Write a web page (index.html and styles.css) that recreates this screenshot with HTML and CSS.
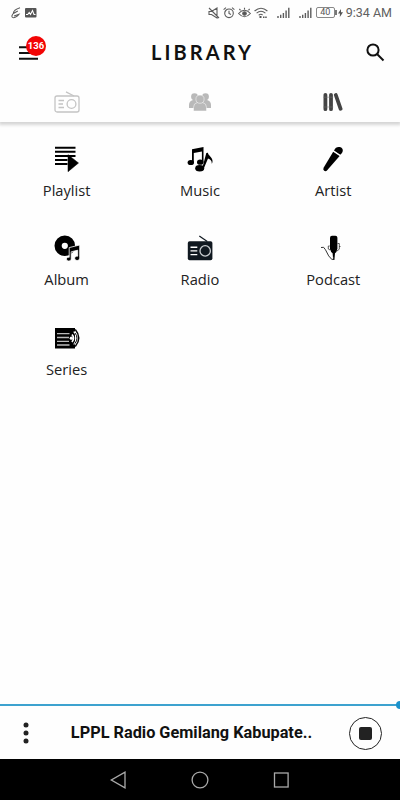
FILE: index.html
```html
<!DOCTYPE html>
<html lang="en">
<head>
  <meta charset="UTF-8">
  <meta name="viewport" content="width=device-width, initial-scale=1.0">
  <title>Library</title>
  <link rel="stylesheet" href="styles.css">
</head>
<body>
  <div class="app">
    <!-- Status bar -->
    <div class="status-bar">
      <svg class="pen" width="10" height="12" viewBox="0 0 10 12"><path d="M9 .8C5 2 2.5 4 2.3 6.5L6.8 4M2.3 6.5C1 8 .4 9.7 1.4 10.4c1.5 1 5-.7 6.6-3.2L3 9"/></svg>
      <svg class="monitor" width="12" height="10" viewBox="0 0 12 10"><rect width="11.5" height="9.5" rx="1"/><path d="M1 6.5h1.7l1.5-2 1.3 2 2-4 1.5 4h1.5"/></svg>
      <div class="status-right">
        <svg width="12" height="12" viewBox="0 0 12 12"><path d="M1 1l10 10M1 4.5h2.5L9 1v10L3.5 7.5H1z"/></svg>
        <svg width="12" height="12" viewBox="0 0 12 12"><circle cx="6" cy="6.3" r="4.3"/><path d="M6 3.8v2.7l2 1M.6 2.7L3 .7M11.4 2.7L9 .7"/></svg>
        <svg width="13" height="12" viewBox="0 0 13 12"><path d="M.6 6.5Q6.5 0 12.4 6.5 6.5 13 .6 6.5zM2.5 3.4L1.4 1.9M6.5 2.5V.7M10.5 3.4l1.1-1.5"/><circle cx="6.5" cy="6.5" r="1.8" fill="#555"/></svg>
        <svg width="14" height="12" viewBox="0 0 14 12"><path d="M.6 4Q7-1.5 13.4 4M2.6 6.2Q7 2.4 11.4 6.2M4.7 8.2Q7 6.4 8.6 8"/><path class="solid" d="M5.5 9h2v2h-2zM9 9.5h1.5V11H9zM11.2 9.5h1.5V11h-1.5z"/></svg>
        <svg class="signal" width="13" height="12" viewBox="0 0 13 12"><path d="M1 9v2M3.7 7.8V11M6.4 6v5M9.1 3.5V11M11.8.8V11"/></svg>
        <svg class="signal" width="13" height="12" viewBox="0 0 13 12"><path d="M1 9v2M3.7 7.8V11M6.4 6v5M9.1 3.5V11M11.8.8V11"/></svg>
        <span class="battery">40</span>
        <svg class="bolt" width="5" height="8" viewBox="0 0 5 8"><path class="solid" d="M3 0L0 4.6h2L1.8 8 5 3.2H3z"/></svg>
        <span class="time">9:34 AM</span>
      </div>
    </div>

    <!-- Header -->
    <header class="header">
      <div class="menu">
        <svg width="20" height="14" viewBox="0 0 20 14"><path d="M0 1.2h19M0 7h19M0 12.8h19"/></svg>
        <span class="badge">136</span>
      </div>
      <h1>LIBRARY</h1>
      <svg class="search" width="19" height="19" viewBox="0 0 19 19"><circle cx="7" cy="7" r="5.6"/><path d="M11 11l6.5 6.5"/></svg>
    </header>

    <!-- Tabs -->
    <nav class="tabs">
      <a class="tab">
        <svg width="26" height="22" viewBox="0 0 26 22" fill="none" stroke="#c4c4c4" stroke-width="1.3"><rect x="1" y="5" width="24" height="16" rx="2"/><path d="M12 .8L20 5M4.5 9.5H10M4.5 13H9M4.5 16.5H10"/><circle cx="17.5" cy="13" r="4.4"/></svg>
      </a>
      <a class="tab">
        <svg width="24" height="20" viewBox="0 0 24 20" fill="#b9b9b9"><circle cx="6.5" cy="4.7" r="3.4"/><circle cx="17.5" cy="4.7" r="3.4"/><path d="M1 16v-3q0-4 4-5h14q4 1 4 5v3z"/><g stroke="#fff" stroke-width=".5"><path d="M5.5 19v-3.6q0-4 4-5h5q4 1 4 5V19z"/><circle cx="12" cy="7.2" r="4.1"/></g></svg>
      </a>
      <a class="tab active">
        <svg width="20" height="20" viewBox="0 0 20 20" fill="none" stroke="#444" stroke-width="3.8" stroke-linecap="round"><path d="M2.4 2.8v14.4M8 2.8v14.4M12.8 3l4.8 13.8"/><path d="M.5 5.2h9.4M.5 15h9.4" stroke="#777" stroke-width=".5"/></svg>
      </a>
    </nav>

    <!-- Library categories -->
    <main class="library">
      <div class="item">
        <svg viewBox="0 0 26 26"><path d="M1 1.7h20.5M1 5.8h20.5M1 9.9h20.5M1 14h12.5M1 18h12.5" fill="none" stroke="#000" stroke-width="2"/><path d="M14 8.7L24.5 17 14 25.7z" stroke="#000" stroke-width=".5" stroke-linejoin="round"/></svg>
        <span>Playlist</span>
      </div>
      <div class="item">
        <svg viewBox="0 0 26 26"><path d="M5 3.3L16.5 1v15.5h-1.6V5.4L6.8 7v10H5z"/><ellipse cx="3.8" cy="16.5" rx="3.2" ry="2.6"/><ellipse cx="13.2" cy="16.2" rx="3.2" ry="2.6"/><path d="M19.3 7l1.6-.2c.3 3.5 6.8 5 3.9 11.2.2-3.2-1.3-4.8-3.8-5.5l-4.2 10-1.5-.6z"/><ellipse cx="12.7" cy="22.2" rx="4.5" ry="3.2"/></svg>
        <span>Music</span>
      </div>
      <div class="item">
        <svg viewBox="0 0 26 26"><path d="M13.2 5.8l6.4 4.2L7.2 24.3q-1.5 1.5-3 .5t-.6-3z"/><path d="M14 4.4q2-4.2 6-3.3 3.8 1.4 2.5 5-.7 1.7-2.3 2.6z"/><path d="M13.5 5.1l6.4 4.2" stroke="#fff" stroke-width=".6"/></svg>
        <span>Artist</span>
      </div>
      <div class="item">
        <svg viewBox="0 0 26 26"><circle cx="10.8" cy="10.8" r="6.7" fill="none" stroke="#000" stroke-width="7.2"/><path d="M15.2 12.6L25.7 10v12.8c0 4-5.6 3.2-5 0 .3-1.3 1.5-1.8 3-1.6v-6l-6.5 1.6v7c0 3-4.7 3-4.7.1 0-1.3 1.2-1.9 2.7-1.6z" stroke="#fff" stroke-width=".8"/></svg>
        <span>Album</span>
      </div>
      <div class="item">
        <svg viewBox="0 0 26 26"><rect x=".8" y="6.3" width="24.6" height="19" rx="1.8" fill="#101820"/><path d="M12.3 1l8 5.5" stroke="#101820" stroke-width="1.2"/><g fill="none" stroke="#fff"><path d="M3.5 12.2h6.8M3.5 15.9h6.8M3.5 19.6h6.8" stroke-width="1.4"/><circle cx="18.2" cy="15.9" r="5.2" stroke="#c9cdd0" stroke-width="1.3"/></g></svg>
        <span>Radio</span>
      </div>
      <div class="item">
        <svg viewBox="0 0 26 26"><rect x="10" y=".8" width="7.4" height="14.6" rx="2"/><path d="M10.2 14h7q-.2 3-2.2 4.2l-.6 6.8h-1.2l-.6-6.8q-2-1.2-2.4-4.2z"/><g fill="none" stroke="#333" stroke-width="1"><path d="M1 12.5q3-1.5 4.5 2.3Q8.5 22 12.2 24.8q1.4-.4 1.4-3"/><path d="M9.8 11H8.3v3l1.8 1M17.5 8.5h1.8v5.7L17 16M19 11.5h1.5" stroke-width=".8"/></g></svg>
        <span>Podcast</span>
      </div>
      <div class="item">
        <svg viewBox="0 0 26 26"><rect x="1" y="3" width="20" height="20.5"/><g fill="none"><path d="M3 8.7h12.5M3 12.5h12M3 16.3h12M3 20h12.5" stroke="#bbb" stroke-width="1.3"/><path d="M18 9.5q3 3.5 0 7.5" stroke="#fff" stroke-width="1.7"/><path d="M19.8 6.5q5 6 0 13" stroke="#fff" stroke-width="1.2"/><path d="M21.3 4.5q7 8.5 0 17" stroke="#000" stroke-width="1.4"/><path d="M21 8q4 5 0 10.5" stroke="#000"/></g><circle cx="17.3" cy="13.2" r="1.6" fill="#fff"/></svg>
        <span>Series</span>
      </div>
    </main>

    <!-- Player -->
    <div class="progress"><span class="thumb"></span></div>
    <div class="player">
      <svg class="more" width="6" height="22" viewBox="0 0 6 22"><circle cx="3" cy="3" r="2.5"/><circle cx="3" cy="11" r="2.5"/><circle cx="3" cy="19" r="2.5"/></svg>
      <div class="track">LPPL Radio Gemilang Kabupate..</div>
      <div class="stop"><span></span></div>
    </div>

    <!-- Android navigation -->
    <div class="android-nav">
      <svg width="18" height="18" viewBox="0 0 18 18"><path d="M16 1.2v15.6L2.3 9z"/></svg>
      <svg width="18" height="18" viewBox="0 0 18 18"><circle cx="9" cy="9" r="7.9"/></svg>
      <svg width="18" height="18" viewBox="0 0 18 18"><rect x="1.5" y="2" width="13.6" height="14"/></svg>
    </div>
  </div>
</body>
</html>
```
FILE: styles.css
```css
* {
  box-sizing: border-box;
}
body {
  margin: 0;
  background: #fefefe;
  color: #222;
  font-family: Roboto, sans-serif;
}
svg {
  display: block;
  flex-shrink: 0;
}
.app {
  display: flex;
  flex-direction: column;
  height: 800px;
  overflow: hidden;
}

/* status bar */
.status-bar {
  display: flex;
  align-items: center;
  height: 25px;
  padding: 0 8px 0 11px;
}
.status-bar svg {
  fill: none;
  stroke: #5c5c5c;
  stroke-width: 1.1;
}
.status-bar .solid {
  fill: #555;
  stroke: none;
}
.status-bar .monitor {
  margin-left: 4px;
  stroke: #fff;
}
.monitor rect {
  fill: #555;
  stroke: none;
}
.status-right {
  display: flex;
  align-items: center;
  margin-left: auto;
  gap: 3px;
}
.status-right .signal {
  margin-left: 6px;
  stroke-width: 1.4;
}
.battery {
  position: relative;
  width: 19px;
  height: 11px;
  margin-left: 1px;
  border: 1px solid #888;
  border-radius: 2px;
  font-size: 9px;
  line-height: 9px;
  text-align: center;
  color: #555;
}
.battery::after {
  content: '';
  position: absolute;
  right: -3px;
  top: 2px;
  width: 2px;
  height: 5px;
  background: #777;
}
.time {
  font-size: 12.5px;
  line-height: 16px;
  color: #606060;
  white-space: nowrap;
}

/* header */
.header {
  display: flex;
  align-items: center;
  justify-content: space-between;
  height: 55px;
  padding: 0 15px 0 19px;
}
.menu {
  position: relative;
}
.menu svg {
  stroke: #111;
  stroke-width: 2;
}
.badge {
  position: absolute;
  left: 7px;
  top: -10px;
  width: 20px;
  height: 20px;
  border-radius: 50%;
  background: #f20505;
  color: #fff;
  font-size: 9.5px;
  font-weight: 700;
  line-height: 20px;
  text-align: center;
}
.header h1 {
  margin: 0 0 2px;
  font-family: Lato, sans-serif;
  font-size: 20px;
  font-weight: 700;
  letter-spacing: 3.1px;
  color: #111;
}
.search {
  fill: none;
  stroke: #111;
  stroke-width: 2;
}

/* tabs */
.tabs {
  display: grid;
  grid-template-columns: repeat(3, 1fr);
  height: 42px;
  box-shadow: 0 2px 3px 1px rgba(0, 0, 0, 0.16);
  clip-path: inset(0 0 -8px 0);
}
.tab {
  display: flex;
  align-items: center;
  justify-content: center;
  padding-top: 1px;
}

/* library */
.library {
  flex: 1;
  display: grid;
  grid-template-columns: repeat(3, 1fr);
  grid-auto-rows: 89.3px;
  padding-top: 24px;
}
.item {
  display: flex;
  flex-direction: column;
  align-items: center;
}
.item svg {
  width: 26px;
  height: 26px;
}
.item span {
  margin-top: 8px;
  font-family: "Open Sans", sans-serif;
  font-size: 14.7px;
  line-height: 20px;
}

/* player */
.progress {
  position: relative;
  height: 2px;
  background: #3da2cf;
}
.thumb {
  position: absolute;
  right: -4px;
  top: -3px;
  width: 8px;
  height: 8px;
  border-radius: 50%;
  background: #1b92cc;
}
.player {
  display: flex;
  align-items: center;
  height: 53px;
  padding: 1px 18px 0 23px;
}
.more {
  fill: #222;
}
.track {
  flex: 1;
  padding: 0 0 1px 5px;
  font-size: 16.3px;
  font-weight: 700;
  text-align: center;
  color: #111;
  white-space: nowrap;
}
.stop {
  display: flex;
  align-items: center;
  justify-content: center;
  width: 33px;
  height: 33px;
  border: 1px solid #222;
  border-radius: 50%;
}
.stop span {
  width: 13px;
  height: 13px;
  border-radius: 2px;
  background: #222;
}

/* android navigation */
.android-nav {
  display: flex;
  align-items: center;
  justify-content: center;
  gap: 64px;
  height: 41px;
  background: #000;
}
.android-nav svg {
  fill: none;
  stroke: #aaa;
  stroke-width: 1.3;
}
```
